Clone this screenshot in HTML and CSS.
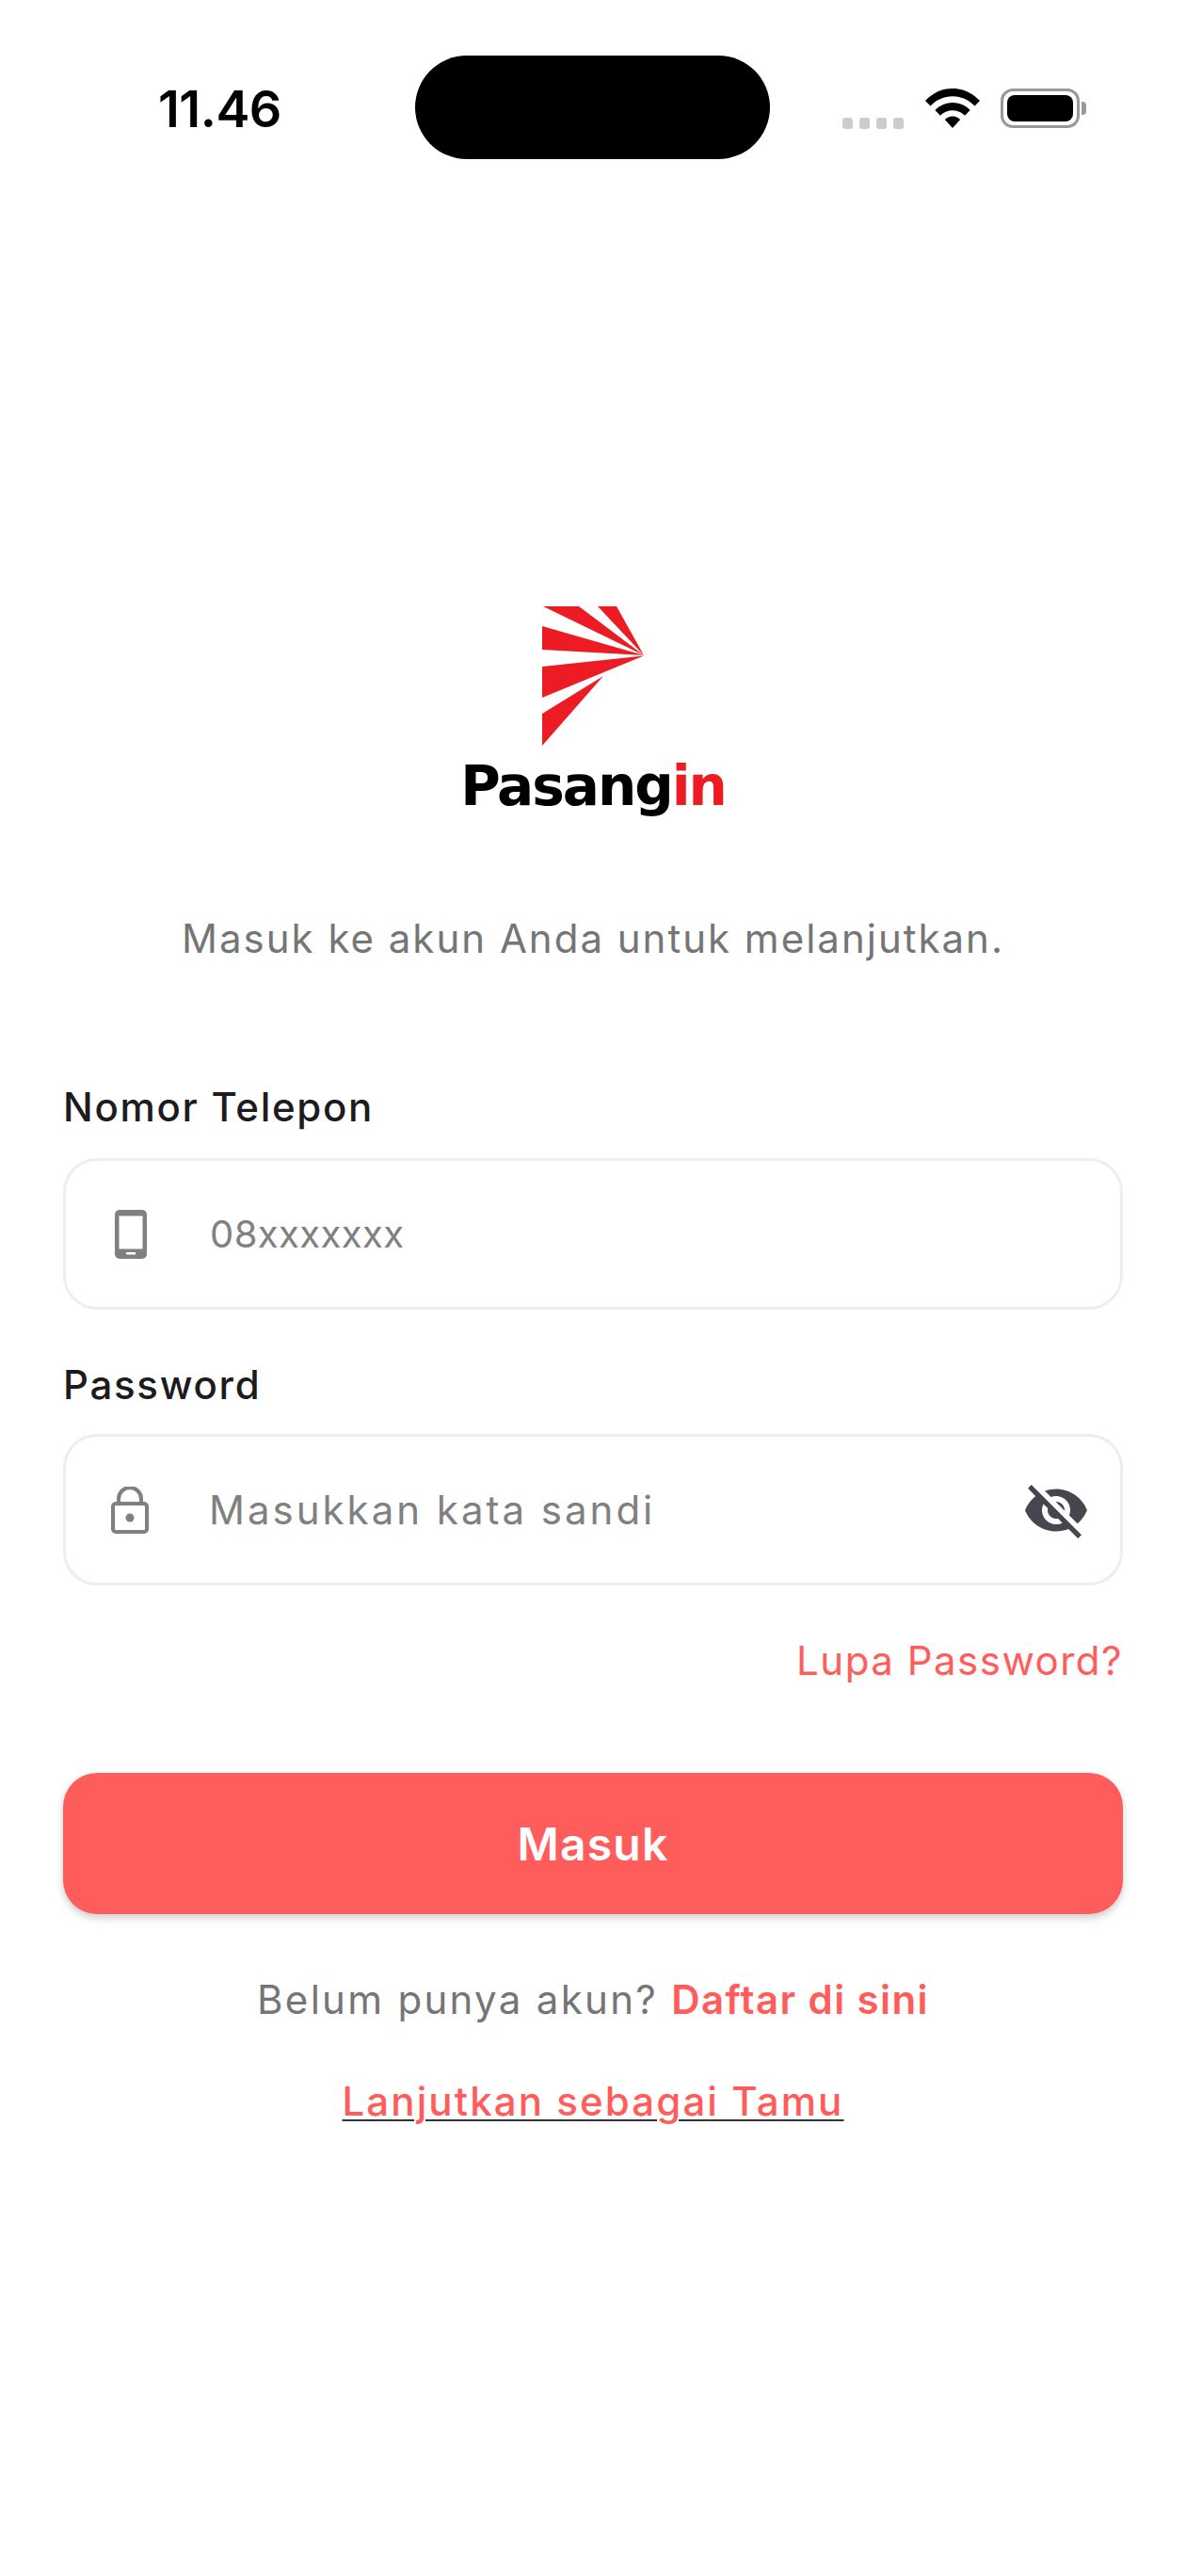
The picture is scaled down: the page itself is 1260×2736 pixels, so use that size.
FILE: index.html
```html
<!DOCTYPE html>
<html lang="id">
<head>
    <meta charset="UTF-8">
    <meta name="viewport" content="width=device-width, initial-scale=1.0">
    <title>Pasangin - Masuk</title>
    <link rel="stylesheet" href="styles.css">
</head>
<body>

    <div class="status-bar">
        <div class="status-time">11.46</div>
        <div class="status-island"></div>
        <div class="status-icons">
            <div class="signal-dots"><span></span><span></span><span></span><span></span></div>
            <svg class="wifi-icon" width="58" height="42" viewBox="0 0 58 42">
                <path d="M29 0C18 0 8 4.500 0 13L5.500 18.500C12 12 20 8.300 29 8.300S46 12 52.500 18.500L58 13C50 4.500 40 0 29 0Z"/>
                <path d="M29 15C22.500 15 15.500 17.700 10.300 23L16 28.700C19.500 25.200 24 23.300 29 23.300S38.500 25.200 42 28.700L47.700 23C42.500 17.700 35.500 15 29 15Z"/>
                <path d="M29 29.500C26 29.500 23 30.700 20.800 33L29 42L37.200 33C35 30.700 32 29.500 29 29.500Z"/>
            </svg>
            <div class="battery">
                <div class="battery-body"><div class="battery-fill"></div></div>
                <div class="battery-nub"></div>
            </div>
        </div>
    </div>

    <main class="login">
        <div class="logo">
            <svg class="logo-mark" width="108" height="148" viewBox="0 0 108 148">
                <polygon points="1,0 39,0 108,52"/>
                <polygon points="59,0 79,0 108,52"/>
                <polygon points="0,21 0,46 108,52"/>
                <polygon points="0,64 0,97 108,52.500"/>
                <polygon points="0,114 0,148 65,74"/>
            </svg>
            <div class="logo-text">Pasang<span class="logo-accent">in</span></div>
        </div>

        <p class="subtitle">Masuk ke akun Anda untuk melanjutkan.</p>

        <div class="field-label first">Nomor Telepon</div>
        <div class="field">
            <svg class="field-icon" width="34" height="52" viewBox="0 0 34 52">
                <path fill-rule="evenodd" d="M5 0H29A5 5 0 0 1 34 5V47A5 5 0 0 1 29 52H5A5 5 0 0 1 0 47V5A5 5 0 0 1 5 0ZM4.500 6.500V41.500H29.500V6.500ZM12 45V47.500H22V45Z"/>
            </svg>
            <span class="placeholder numbers">08xxxxxxx</span>
        </div>

        <div class="field-label">Password</div>
        <div class="field">
            <svg class="field-icon lock" width="40" height="50" viewBox="0 0 40 50">
                <rect x="2" y="18" width="36" height="30" rx="3" fill="none" stroke="#808080" stroke-width="4"/>
                <path d="M8 18V13A12 12 0 0 1 32 13V18" fill="none" stroke="#808080" stroke-width="4"/>
                <circle cx="20" cy="33" r="4.500"/>
            </svg>
            <span class="placeholder">Masukkan kata sandi</span>
            <svg class="eye-icon" width="72" height="72" viewBox="0 0 24 24">
                <path d="M12 7c2.760 0 5 2.240 5 5 0 .65-.13 1.260-.36 1.830l2.920 2.920c1.510-1.260 2.700-2.890 3.430-4.750-1.730-4.390-6-7.500-11-7.500-1.400 0-2.740.25-3.980.7l2.160 2.160C10.740 7.130 11.350 7 12 7zM2 4.270l2.280 2.280.46.46C3.080 8.300 1.780 10.020 1 12c1.730 4.390 6 7.500 11 7.500 1.550 0 3.030-.3 4.380-.84l.42.42L19.730 22 21 20.730 3.270 3 2 4.270zM7.530 9.800l1.550 1.550c-.05.21-.08.43-.08.65 0 1.660 1.340 3 3 3 .22 0 .44-.03.65-.08l1.550 1.550c-.67.33-1.410.53-2.200.53-2.760 0-5-2.240-5-5 0-.79.2-1.530.53-2.200zm4.310-.78l3.150 3.150.02-.16c0-1.660-1.340-3-3-3l-.17.01z"/>
            </svg>
        </div>

        <div class="forgot">Lupa Password?</div>

        <button class="submit-btn">Masuk</button>

        <p class="register">Belum punya akun? <span class="register-link">Daftar di sini</span></p>
        <p class="guest"><span class="guest-link">Lanjutkan sebagai Tamu</span></p>
    </main>

</body>
</html>
```

FILE: styles.css
```css
body {
    margin: 0;
    height: 2736px;
    background-color: #ffffff;
    color: #1c1c1e;
    font-family: "Inter", "Liberation Sans", sans-serif;
    overflow: hidden;
}

/* status bar */
.status-bar {
    display: grid;
    grid-template-columns: 441px 377px 1fr;
    align-items: center;
    padding-top: 59px;
    height: 110px;
}
.status-time {
    padding-left: 168px;
    padding-top: 2px;
    font-size: 54px;
    font-weight: 600;
    letter-spacing: -0.5px;
    color: #000000;
}
.status-island {
    height: 110px;
    background-color: #000000;
    border-radius: 55px;
}
.status-icons {
    display: flex;
    align-items: center;
    padding-left: 77px;
    padding-top: 2px;
}
.signal-dots {
    display: flex;
    gap: 7px;
    margin-top: 32px;
}
.signal-dots span {
    width: 11px;
    height: 12px;
    border-radius: 3px;
    background-color: #cccccc;
}
.wifi-icon {
    margin-left: 23px;
}
.battery {
    display: flex;
    align-items: center;
    margin-left: 22px;
}
.battery-body {
    box-sizing: border-box;
    width: 84px;
    height: 42px;
    padding: 4px;
    border: 3px solid #999999;
    border-radius: 13px;
}
.battery-fill {
    height: 100%;
    background-color: #000000;
    border-radius: 8px;
}
.battery-nub {
    width: 5px;
    height: 14px;
    margin-left: 2px;
    background-color: #999999;
    border-radius: 0 4px 4px 0;
}

/* login form */
.login {
    padding: 0 67px;
}
.logo {
    display: flex;
    flex-direction: column;
    align-items: center;
    margin-top: 475px;
}
.logo-mark {
    display: block;
    fill: #ed1c24;
}
.logo-text {
    margin-top: 13px;
    font-family: "DejaVu Sans", sans-serif;
    font-size: 58px;
    font-weight: 700;
    line-height: 60px;
    letter-spacing: -2px;
    color: #000000;
}
.logo-accent {
    color: #ed1c24;
}
.subtitle {
    margin: 102px 0 0;
    font-size: 42px;
    line-height: 60px;
    letter-spacing: 2px;
    text-align: center;
    color: #757575;
}
.field-label {
    margin-top: 52px;
    margin-bottom: 24px;
    font-size: 42px;
    font-weight: 500;
    line-height: 56px;
    letter-spacing: 1.700px;
}
.field-label.first {
    margin-top: 121px;
    margin-bottom: 26px;
}
.field {
    box-sizing: border-box;
    display: flex;
    align-items: center;
    height: 161px;
    padding: 0 32px 0 52px;
    border: 3px solid #eeeeee;
    border-radius: 36px;
}
.field-icon {
    flex: none;
    fill: #808080;
}
.field-icon.lock {
    margin-left: -4px;
}
.placeholder {
    margin-left: 64px;
    font-size: 42px;
    letter-spacing: 3px;
    color: #808080;
}
.placeholder.numbers {
    margin-left: 67px;
    font-size: 40px;
    letter-spacing: 0.400px;
}
.eye-icon {
    flex: none;
    margin-left: auto;
    fill: #49454f;
}
.forgot {
    margin-top: 52px;
    font-size: 42px;
    line-height: 56px;
    letter-spacing: 1.500px;
    text-align: right;
    color: #ff5c5c;
}
.submit-btn {
    display: block;
    width: 100%;
    height: 150px;
    margin-top: 91px;
    border: none;
    border-radius: 36px;
    background-color: #ff5c5c;
    box-shadow: 0 4px 8px rgba(0, 0, 0, 0.2);
    color: #ffffff;
    font-family: inherit;
    font-size: 48px;
    font-weight: 600;
    letter-spacing: 1.200px;
}
.register {
    margin: 63px 0 0;
    font-size: 42px;
    line-height: 56px;
    letter-spacing: 2.300px;
    text-align: center;
    color: #757575;
}
.register-link {
    font-weight: 600;
    letter-spacing: 1.400px;
    color: #ff5c5c;
}
.guest {
    margin: 52px 0 0;
    font-size: 42px;
    font-weight: 500;
    line-height: 56px;
    letter-spacing: 2.100px;
    text-align: center;
}
.guest-link {
    color: #ff5c5c;
    text-decoration: underline;
    text-decoration-color: #333333;
    text-decoration-thickness: 2px;
    text-underline-offset: 4px;
}
```
